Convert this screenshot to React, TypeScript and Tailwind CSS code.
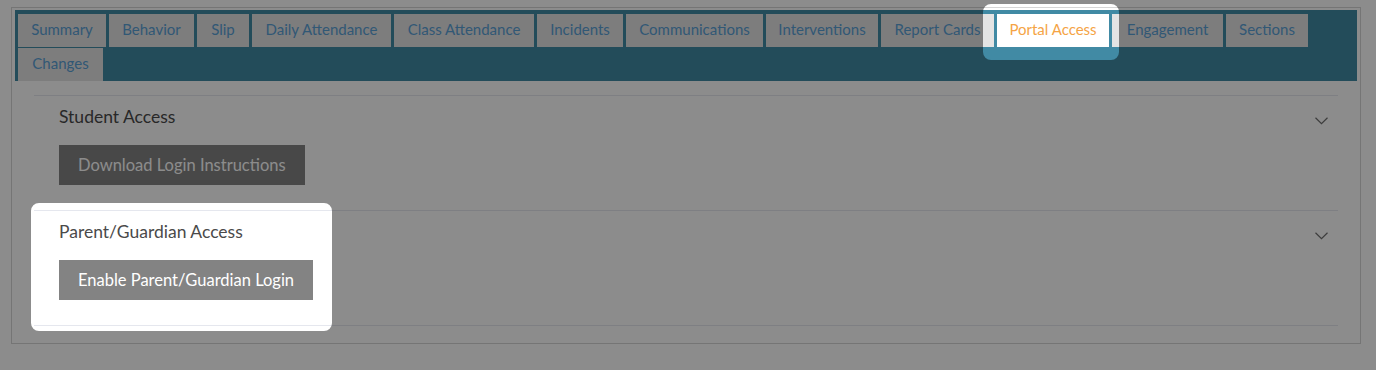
const tabs = [
  { label: "Summary", w: "w-[88px]" },
  { label: "Behavior", w: "w-[85px]" },
  { label: "Slip", w: "w-[52px]" },
  { label: "Daily Attendance", w: "w-[139px]" },
  { label: "Class Attendance", w: "w-[140px]" },
  { label: "Incidents", w: "w-[86px]" },
  { label: "Communications", w: "w-[137px]" },
  { label: "Interventions", w: "w-[112px]" },
  { label: "Report Cards", w: "w-[113px]" },
  { label: "Portal Access", w: "w-[112px]", active: true },
  { label: "Engagement", w: "w-[111px]" },
  { label: "Sections", w: "w-[82px]" },
  { label: "Changes", w: "w-[85px]" },
];

const sections = [
  { title: "Student Access", button: "Download Login Instructions" },
  { title: "Parent/Guardian Access", button: "Enable Parent/Guardian Login" },
];

// rounded rect sub-path for the spotlight holes
const hole = (x: number, y: number, w: number, h: number, r: number) =>
  `M${x + r} ${y}H${x + w - r}A${r} ${r} 0 0 1 ${x + w} ${y + r}V${y + h - r}A${r} ${r} 0 0 1 ${x + w - r} ${y + h}H${x + r}A${r} ${r} 0 0 1 ${x} ${y + h - r}V${y + r}A${r} ${r} 0 0 1 ${x + r} ${y}Z`;

const Chevron = () => (
  <svg width="13" height="8" viewBox="0 0 13 8" className="mt-[11px]">
    <path d="M0.5 0.8L6.5 6.6L12.5 0.8" fill="none" stroke="#6f6f6f" strokeWidth="1.2" />
  </svg>
);

export default function App() {
  return (
    <div
      className="relative w-[1376px] h-[370px] overflow-hidden bg-white"
      style={{ fontFamily: "Lato, 'Open Sans', sans-serif" }}
    >
      <div className="ml-[11px] mt-[7px] w-[1350px] border border-[#d6d6d6] px-[3px] pt-[2px]">
        <div className="bg-[#418aa4] pl-[3px] pt-[4px] flex flex-wrap gap-x-[3px] gap-y-[1px]">
          {tabs.map((t) => (
            <div
              key={t.label}
              className={`${t.w} h-[33px] pb-[3px] flex items-center justify-center text-[15px] ${
                t.active ? "bg-white text-[#f5a445]" : "bg-[#e4e4e4] text-[#5aa0d6]"
              }`}
            >
              {t.label}
            </div>
          ))}
        </div>

        <div className="mx-[19px] mt-[14px] pb-[17px]">
          {sections.map((s, i) => (
            <div
              key={s.title}
              className={`border-t border-[#e5e7ee] pl-[25px] pr-[10px] pt-[10px] pb-[25px] ${
                i === sections.length - 1 ? "border-b" : ""
              }`}
            >
              <div className="flex items-start justify-between">
                <h3 className="text-[17.5px] leading-[22px] text-[#4a4a4a]">{s.title}</h3>
                <Chevron />
              </div>
              <button className="mt-[17px] h-[40px] px-[19px] bg-[#838383] text-white text-[16.5px]">
                {s.button}
              </button>
            </div>
          ))}
        </div>
      </div>

      <svg className="absolute inset-0 pointer-events-none" width="1376" height="370">
        <path
          fillRule="evenodd"
          fill="rgba(0,0,0,0.45)"
          d={`M0 0H1376V370H0Z ${hole(983, 4, 136, 56, 8)} ${hole(31, 203, 301, 128, 8)}`}
        />
      </svg>
    </div>
  );
}
